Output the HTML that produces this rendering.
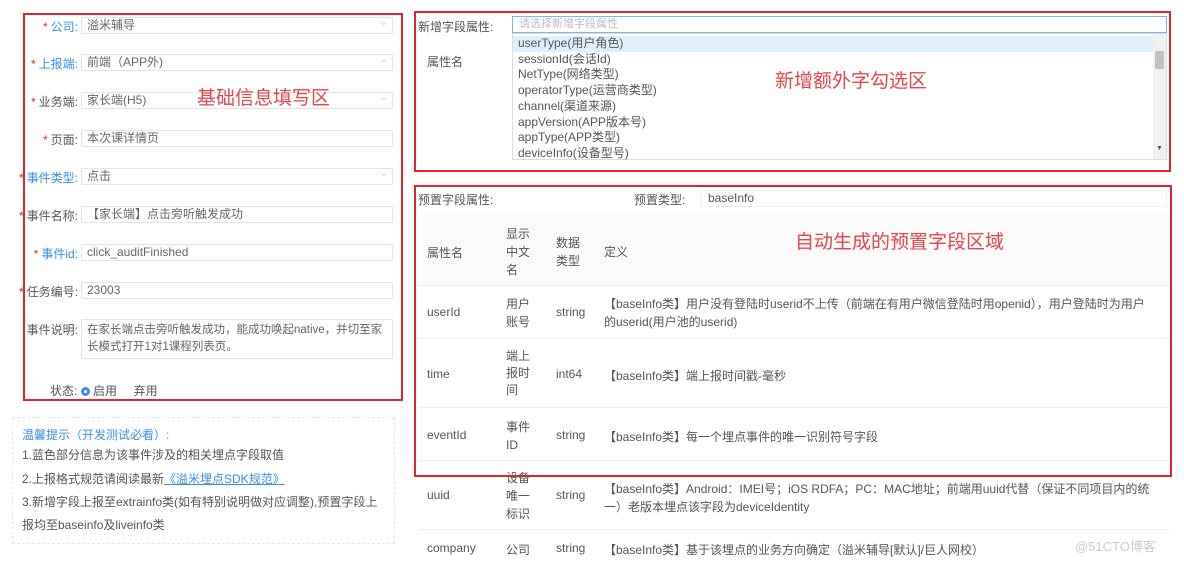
<!DOCTYPE html>
<html><head><meta charset="utf-8"><style>
*{margin:0;padding:0;box-sizing:border-box}
body{width:1184px;height:562px;overflow:hidden;background:#fff;position:relative;font-family:"Liberation Sans","Noto Sans CJK SC",sans-serif;font-size:12px;color:#555}
.a{position:absolute;white-space:nowrap}
.red{border:2px solid #e0262b}
.lab{position:absolute;right:1106px;text-align:right;white-space:nowrap;color:#555}
.lab b{color:#e0262b;font-weight:normal;margin-right:3px}
.blue{color:#3a8ee6}
.inp{position:absolute;left:81px;width:312px;height:17px;border:1px solid #e4e4e4;border-radius:2px;padding-left:5px;line-height:15px;color:#666}
.inp.s::after{content:"⌄";position:absolute;right:4px;top:-3px;color:#ccc;font-size:10px}
.big{color:#e8454a;font-size:19px}
.row{position:absolute;left:418px;width:752px;border-top:1px solid #eee}
.c{position:absolute;white-space:nowrap}
</style></head><body>
<div class="a red" style="left:23px;top:13px;width:380px;height:388px"></div>
<div class="lab" style="top:18px"><b>*</b><span class="blue">公司:</span></div><div class="inp s" style="top:17px">溢米辅导</div>
<div class="lab" style="top:55px"><b>*</b><span class="blue">上报端:</span></div><div class="inp s" style="top:54px">前端（APP外)</div>
<div class="lab" style="top:93px"><b>*</b>业务端:</div><div class="inp s" style="top:92px">家长端(H5)</div>
<div class="lab" style="top:131px"><b>*</b>页面:</div><div class="inp" style="top:130px">本次课详情页</div>
<div class="lab" style="top:169px"><b>*</b><span class="blue">事件类型:</span></div><div class="inp s" style="top:168px">点击</div>
<div class="lab" style="top:207px"><b>*</b>事件名称:</div><div class="inp" style="top:206px">【家长端】点击旁听触发成功</div>
<div class="lab" style="top:245px"><b>*</b><span class="blue">事件id:</span></div><div class="inp" style="top:244px">click_auditFinished</div>
<div class="lab" style="top:283px"><b>*</b>任务编号:</div><div class="inp" style="top:282px">23003</div>
<div class="lab" style="top:321px">事件说明:</div>
<div class="inp" style="top:319px;height:40px;line-height:17px;padding-top:2px;white-space:normal;font-size:11.5px">在家长端点击旁听触发成功，能成功唤起native，并切至家长模式打开1对1课程列表页。</div>
<div class="a" style="left:50px;top:382px">状态: <span style="display:inline-block;width:9px;height:9px;border-radius:50%;border:3px solid #3a8ee6;vertical-align:-1px"></span> 启用 &nbsp;&nbsp;&nbsp; 弃用</div>
<div class="a" style="left:12px;top:417px;width:383px;height:127px;border:1px dashed #e6e6e6"></div>
<div class="a blue" style="left:22px;top:426px">温馨提示（开发测试必看）:</div>
<div class="a" style="left:22px;top:446px">1.蓝色部分信息为该事件涉及的相关埋点字段取值</div>
<div class="a" style="left:22px;top:470px">2.上报格式规范请阅读最新<span class="blue" style="text-decoration:underline">《溢米埋点SDK规范》</span></div>
<div class="a" style="left:22px;top:493px">3.新增字段上报至extrainfo类(如有特别说明做对应调整),预置字段上</div>
<div class="a" style="left:22px;top:516px">报均至baseinfo及liveinfo类</div>
<div class="a big" style="left:197px;top:83px">基础信息填写区</div>

<div class="a red" style="left:414px;top:11px;width:757px;height:161px"></div>
<div class="a" style="left:418px;top:18px">新增字段属性:</div>
<div class="a" style="left:512px;top:16px;width:655px;height:17px;border:1px solid #7fb4e8;padding-left:6px;line-height:15px;color:#bbb;font-size:11px">请选择新增字段属性</div>
<div class="a" style="left:512px;top:33px;width:655px;height:127px;border:1px solid #ddd;background:#fff;line-height:15.7px;color:#555;padding-top:2px">
<div style="background:#dff0fa;padding-left:5px">userType(用户角色)</div>
<div style="padding-left:5px">sessionId(会话Id)</div>
<div style="padding-left:5px">NetType(网络类型)</div>
<div style="padding-left:5px">operatorType(运营商类型)</div>
<div style="padding-left:5px">channel(渠道来源)</div>
<div style="padding-left:5px">appVersion(APP版本号)</div>
<div style="padding-left:5px">appType(APP类型)</div>
<div style="padding-left:5px">deviceInfo(设备型号)</div>
<div style="position:absolute;right:0;top:0;width:13px;height:125px;background:#f1f1f1"><div style="position:absolute;left:2px;top:17px;width:9px;height:18px;background:#c1c1c1"></div><div style="position:absolute;left:3px;bottom:2px;font-size:7px;color:#555">▼</div></div>
</div>
<div class="a" style="left:427px;top:53px">属性名</div>
<div class="a big" style="left:775px;top:66px">新增额外字勾选区</div>

<div class="a red" style="left:414px;top:185px;width:758px;height:292px"></div>
<div class="a" style="left:418px;top:191px">预置字段属性:</div>
<div class="a" style="left:634px;top:191px">预置类型:</div>
<div class="a" style="left:700px;top:190px;width:467px;height:17px;border:1px solid #eee;padding-left:7px;line-height:15px">baseInfo</div>
<div class="a" style="left:418px;top:215px;width:752px;height:70px;background:#fafafa"></div>
<div class="c" style="left:427px;top:244px">属性名</div>
<div class="c" style="left:506px;top:225px;line-height:18px">显示<br>中文<br>名</div>
<div class="c" style="left:556px;top:234px;line-height:18px">数据<br>类型</div>
<div class="c" style="left:604px;top:243px">定义</div>
<div class="a big" style="left:795px;top:227px">自动生成的预置字段区域</div>

<div class="row" style="top:285px;height:53px"></div>
<div class="c" style="left:427px;top:305px">userId</div>
<div class="c" style="left:506px;top:295px;line-height:18px">用户<br>账号</div>
<div class="c" style="left:556px;top:305px">string</div>
<div class="c" style="left:604px;top:295px;line-height:18px">【baseInfo类】用户没有登陆时userid不上传（前端在有用户微信登陆时用openid），用户登陆时为用户<br>的userid(用户池的userid)</div>

<div class="row" style="top:338px;height:69px"></div>
<div class="c" style="left:427px;top:367px">time</div>
<div class="c" style="left:506px;top:348px;line-height:17px">端上<br>报时<br>间</div>
<div class="c" style="left:556px;top:367px">int64</div>
<div class="c" style="left:604px;top:367px">【baseInfo类】端上报时间戳-毫秒</div>

<div class="row" style="top:407px;height:53px"></div>
<div class="c" style="left:427px;top:428px">eventId</div>
<div class="c" style="left:506px;top:418px;line-height:18px">事件<br>ID</div>
<div class="c" style="left:556px;top:428px">string</div>
<div class="c" style="left:604px;top:428px">【baseInfo类】每一个埋点事件的唯一识别符号字段</div>

<div class="row" style="top:460px;height:67px"></div>
<div class="c" style="left:427px;top:488px">uuid</div>
<div class="c" style="left:506px;top:469px;line-height:18px">设备<br>唯一<br>标识</div>
<div class="c" style="left:556px;top:488px">string</div>
<div class="c" style="left:604px;top:480px;line-height:18px">【baseInfo类】Android：IMEI号；iOS RDFA；PC：MAC地址；前端用uuid代替（保证不同项目内的统<br>一）老版本埋点该字段为deviceIdentity</div>

<div class="row" style="top:529px;height:33px"></div>
<div class="c" style="left:427px;top:541px">company</div>
<div class="c" style="left:506px;top:541px">公司</div>
<div class="c" style="left:556px;top:541px">string</div>
<div class="c" style="left:604px;top:541px">【baseInfo类】基于该埋点的业务方向确定（溢米辅导[默认]/巨人网校）</div>
<div class="c" style="left:1075px;top:536px;color:#ccc;font-size:13px">@51CTO博客</div>
</body></html>
